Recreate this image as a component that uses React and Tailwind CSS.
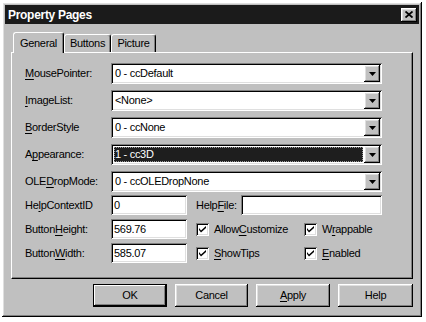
import React from 'react'

const raised =
  'shadow-[inset_-1px_-1px_0_#000,inset_1px_1px_0_#fff,inset_-2px_-2px_0_#808080,inset_2px_2px_0_#dfdfdf]'
const sunken =
  'shadow-[inset_1px_1px_0_#808080,inset_-1px_-1px_0_#fff,inset_2px_2px_0_#000,inset_-2px_-2px_0_#dfdfdf]'

function U({ children }) {
  return <span className="underline underline-offset-[2px]">{children}</span>
}

function Arrow() {
  return (
    <svg width="7" height="4" viewBox="0 0 7 4" aria-hidden>
      <polygon points="0,0 7,0 3.5,4" fill="#000" />
    </svg>
  )
}

function Combo({ value, selected }) {
  return (
    <div className={`flex h-[21px] w-[271px] bg-white p-[2px] ${sunken}`}>
      <div className="flex min-w-0 flex-1 items-center pr-[1px]">
        {selected ? (
          <div className="ml-[1px] flex h-[15px] flex-1 items-center bg-[#1e1e1e] pl-[1px] text-white outline outline-1 outline-dotted outline-[#9a9a9a] -outline-offset-1">
            {value}
          </div>
        ) : (
          <span className="pl-[2px]">{value}</span>
        )}
      </div>
      <div className={`flex w-[16px] items-center justify-center bg-[#c0c0c0] ${raised}`}>
        <Arrow />
      </div>
    </div>
  )
}

function TextBox({ value, w }) {
  return (
    <div className={`flex h-[20px] items-center bg-white pl-[3px] ${sunken} ${w}`}>{value}</div>
  )
}

function Check({ children, w }) {
  return (
    <div className={`flex items-center gap-[5px] ${w}`}>
      <div className={`flex h-[13px] w-[13px] items-center justify-center bg-white ${sunken}`}>
        <svg width="7" height="7" viewBox="0 0 7 7" aria-hidden>
          <path d="M0 2 L2 4.5 L7 0 L7 2 L2 6.5 L0 4 Z" fill="#000" />
        </svg>
      </div>
      <span>{children}</span>
    </div>
  )
}

function Row({ label, children }) {
  return (
    <div className="flex items-center">
      <div className="w-[86px]">{label}</div>
      {children}
    </div>
  )
}

function Tab({ children, active, w }) {
  return (
    <div
      className={`flex items-center justify-center rounded-t-[3px] border-l border-t border-r border-l-white border-t-white border-r-black bg-[#c0c0c0] shadow-[inset_-1px_0_0_#808080] ${w} ${
        active ? 'relative z-10 -mb-[1px] h-[21px]' : 'mt-[2px] h-[18px]'
      }`}
    >
      {children}
    </div>
  )
}

function Button({ children, def, w }) {
  return (
    <div
      className={`flex h-[23px] items-center justify-center bg-[#c0c0c0] ${w} ${
        def
          ? 'border border-black shadow-[inset_-1px_-1px_0_#000,inset_1px_1px_0_#fff,inset_-2px_-2px_0_#808080]'
          : raised
      }`}
    >
      {children}
    </div>
  )
}

export default function App() {
  return (
    <div className="h-[322px] w-[426px] bg-white pl-[2px] pt-[2px] font-['Liberation_Sans',Arial,sans-serif] text-[11px] tracking-[-0.3px] text-black">
      <div className={`flex h-[315px] w-[420px] flex-col bg-[#c0c0c0] p-[3px] ${raised}`}>
        <div className="flex h-[19px] items-center justify-between bg-[#1b1b1b] pl-[3px] pr-[2px]">
          <span className="text-[12px] font-bold text-white">Property Pages</span>
          <div className={`flex h-[14px] w-[16px] items-center justify-center bg-[#c0c0c0] ${raised}`}>
            <svg width="8" height="7" viewBox="0 0 8 7" aria-hidden>
              <path d="M0.5 0.5 L7.5 6.5 M7.5 0.5 L0.5 6.5" stroke="#000" strokeWidth="1.8" />
            </svg>
          </div>
        </div>

        <div className="mt-[8px] flex flex-col px-[6px]">
          <div className="flex h-[20px] items-start pl-[2px]">
            <Tab active w="w-[51px]">General</Tab>
            <Tab w="w-[47px]">Buttons</Tab>
            <Tab w="w-[45px]">Picture</Tab>
          </div>

          <div className="flex h-[227px] flex-col border-l border-t border-r border-b border-l-white border-t-white border-r-black border-b-black pl-[13px] pt-[10px] shadow-[inset_-1px_-1px_0_#808080]">
            <div className="flex flex-col gap-[6px]">
              <Row label={<><U>M</U>ousePointer:</>}>
                <Combo value="0 - ccDefault" />
              </Row>
              <Row label={<><U>I</U>mageList:</>}>
                <Combo value="<None>" />
              </Row>
              <Row label={<><U>B</U>orderStyle</>}>
                <Combo value="0 - ccNone" />
              </Row>
              <Row label={<>A<U>p</U>pearance:</>}>
                <Combo value="1 - cc3D" selected />
              </Row>
              <Row label={<>OLE<U>D</U>ropMode:</>}>
                <Combo value="0 - ccOLEDropNone" />
              </Row>
            </div>

            <div className="mt-[3px] flex flex-col gap-[4px]">
              <Row label={<>He<U>l</U>pContextID</>}>
                <TextBox value="0" w="w-[76px]" />
                <div className="ml-[9px] w-[45px]">
                  Help<U>F</U>ile:
                </div>
                <TextBox value="" w="w-[141px]" />
              </Row>
              <Row label={<>Button<U>H</U>eight:</>}>
                <TextBox value="569.76" w="w-[76px]" />
                <div className="ml-[9px] flex">
                  <Check w="w-[108px]">
                    Allow<U>C</U>ustomize
                  </Check>
                  <Check>
                    W<U>r</U>appable
                  </Check>
                </div>
              </Row>
              <Row label={<>Button<U>W</U>idth:</>}>
                <TextBox value="585.07" w="w-[76px]" />
                <div className="ml-[9px] flex">
                  <Check w="w-[108px]">
                    <U>S</U>howTips
                  </Check>
                  <Check>
                    <U>E</U>nabled
                  </Check>
                </div>
              </Row>
            </div>
          </div>

          <div className="mt-[5px] flex justify-end gap-[8px]">
            <Button def w="w-[74px]">OK</Button>
            <Button w="w-[73px]">Cancel</Button>
            <Button w="w-[74px]">
              <U>A</U>pply
            </Button>
            <Button w="w-[75px]">Help</Button>
          </div>
        </div>
      </div>
    </div>
  )
}
